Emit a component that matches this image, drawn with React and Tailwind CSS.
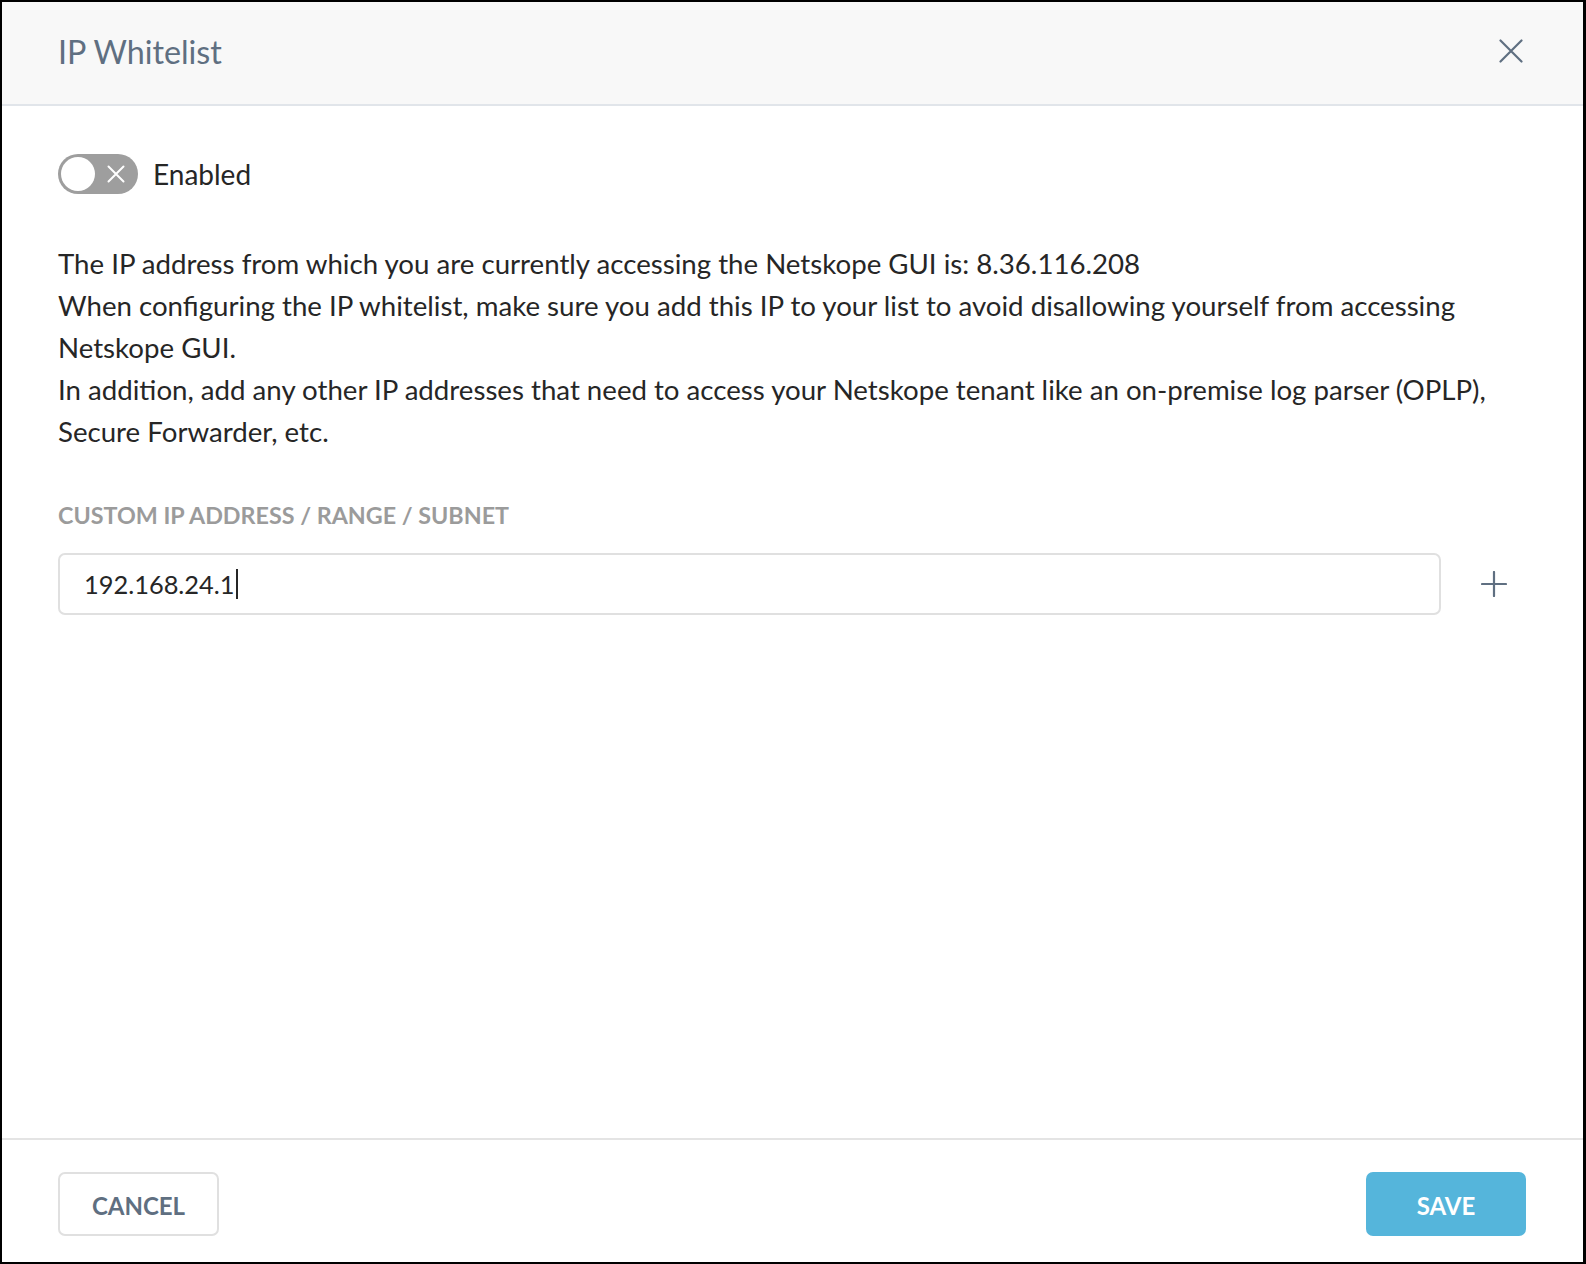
export default function App() {
  const font = { fontFamily: "Lato, 'Noto Sans', sans-serif" };
  return (
    <div
      className="w-[1586px] h-[1264px] bg-white border-l-2 border-t-2 border-b-2 border-r-[3px] border-black flex flex-col"
      style={font}
    >
      <div className="h-[104px] shrink-0 bg-[#f8f8f8] border-b-2 border-[#e1e5ea] flex items-center justify-between pl-[56px] pr-[57px]">
        <div className="text-[32.3px] leading-none text-[#5f6f81] -mt-[1px]">IP Whitelist</div>
        <button className="w-[32px] h-[32px] flex items-center justify-center -mr-[1px] -mt-[4px]">
          <svg width="24" height="24" viewBox="0 0 24 24" fill="none" stroke="#5f6f81" strokeWidth="2.2" strokeLinecap="round">
            <path d="M1.5 1.5 L22.5 22.5 M22.5 1.5 L1.5 22.5" />
          </svg>
        </button>
      </div>

      <div className="flex-1 flex flex-col pl-[56px] pr-[57px] pt-[48px]">
        <div className="flex items-center">
          <div className="w-[80px] h-[40px] rounded-full bg-[#9e9e9e] flex items-center pl-[3px] relative">
            <div className="w-[34px] h-[34px] rounded-full bg-white" />
            <svg className="ml-[12px]" width="18" height="18" viewBox="0 0 18 18" fill="none" stroke="white" strokeWidth="2" strokeLinecap="round">
              <path d="M1.5 1.5 L16.5 16.5 M16.5 1.5 L1.5 16.5" />
            </svg>
          </div>
          <span className="ml-[15px] text-[28px] leading-[40px] text-[#262626]">Enabled</span>
        </div>

        <div className="mt-[49px] text-[27.65px] leading-[42px] text-[#262626]">
          <p>The IP address from which you are currently accessing the Netskope GUI is: 8.36.116.208</p>
          <p>When configuring the IP whitelist, make sure you add this IP to your list to avoid disallowing yourself from accessing Netskope GUI.</p>
          <p>In addition, add any other IP addresses that need to access your Netskope tenant like an on-premise log parser (OPLP), Secure Forwarder, etc.</p>
        </div>

        <div className="mt-[44px] text-[23.3px] leading-[36px] font-bold text-[#9b9b9b] uppercase">
          Custom IP Address / Range / Subnet
        </div>

        <div className="mt-[20px] flex items-center">
          <div className="w-[1383px] h-[62px] border-2 border-[#e0e0e0] rounded-[7px] flex items-center pl-[24px]">
            <span className="text-[25.4px] text-[#262626]">192.168.24.1</span>
            <span className="w-[2px] h-[30px] bg-[#262626] ml-[1px]" />
          </div>
          <button className="ml-[21px] w-[64px] h-[62px] flex items-center justify-center">
            <svg width="26" height="26" viewBox="0 0 26 26" fill="none" stroke="#5f6f81" strokeWidth="2.2" strokeLinecap="round">
              <path d="M13 1 L13 25 M1 13 L25 13" />
            </svg>
          </button>
        </div>
      </div>

      <div className="shrink-0 border-t-2 border-[#e4e4e4] pt-[32px] pb-[26px] pl-[56px] pr-[57px] flex justify-between">
        <button className="w-[161px] h-[64px] border-2 border-[#e0e0e0] rounded-[7px] text-[24px] font-bold text-[#5f6f81] flex items-center justify-center pt-[3px]">
          CANCEL
        </button>
        <button className="w-[160px] h-[64px] rounded-[7px] bg-[#55b5db] text-[24px] font-bold text-white flex items-center justify-center pt-[3px]">
          SAVE
        </button>
      </div>
    </div>
  );
}
